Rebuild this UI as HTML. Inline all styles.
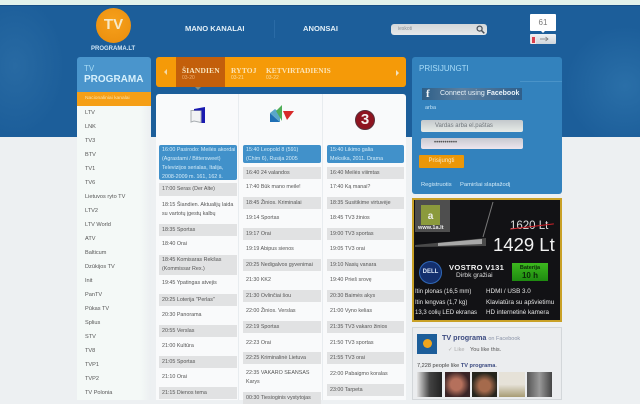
<!DOCTYPE html>
<html><head><meta charset="utf-8">
<style>
html,body{margin:0;padding:0;width:640px;height:400px;overflow:hidden;background:#edf0f2;font-family:"Liberation Sans",sans-serif}
.a{position:absolute;white-space:nowrap}
.r{position:absolute;width:78px;font-size:5.35px;line-height:9px;color:#555;padding-left:3px;box-sizing:border-box;display:flex;flex-direction:column;justify-content:center;white-space:nowrap}
.g{background:#e1e2e3}
.b{position:absolute;width:78px;background:#4191ca;color:#d5ecf8;font-size:5.35px;line-height:9px;padding:1px 0 0 3px;box-sizing:border-box;border-radius:2px;white-space:nowrap}
.m{position:absolute;left:85px;font-size:5.6px;color:#555;line-height:8px;white-space:nowrap}
</style></head><body>
<div class="a" style="left:0;top:0;width:640px;height:5px;background:#e2f2ec"></div>
<div class="a" style="left:0;top:5px;width:640px;height:132px;background:radial-gradient(ellipse 60px 60px at 625px 80px,#2a6fa8,transparent),radial-gradient(ellipse 50px 70px at 15px 60px,#286aa3,transparent),#1c5e9a;border-top:1px solid #174f86;box-sizing:border-box"></div>

<!-- logo -->
<div class="a" style="left:96px;top:8px;width:35px;height:35px;border-radius:50%;background:radial-gradient(circle at 50% 40%,#f7a11c,#e98c0c);color:#f6e9c8;font:bold 15px/33px 'Liberation Sans',sans-serif;text-align:center">TV</div>
<div class="a" style="left:91px;top:45px;font:bold 6px/9px 'Liberation Sans',sans-serif;color:#cfe5f5">PROGRAMA.LT</div>

<!-- nav -->
<div class="a" style="left:185px;top:24px;font:bold 7.6px/10px 'Liberation Sans',sans-serif;color:#e3f0f8">MANO KANALAI</div>
<div class="a" style="left:274px;top:20px;width:1px;height:18px;background:#2a6ba6"></div>
<div class="a" style="left:303px;top:24px;font:bold 7.6px/10px 'Liberation Sans',sans-serif;color:#e3f0f8">ANONSAI</div>

<!-- search -->
<div class="a" style="left:391px;top:24px;width:96px;height:11px;border-radius:3px;background:linear-gradient(#d3d7d9,#e6e9ea);font-size:5px;line-height:11px;color:#8a9096;text-indent:7px">ieskoti</div>
<svg class="a" style="left:476px;top:25px" width="9" height="9" viewBox="0 0 9 9"><circle cx="3.6" cy="3.6" r="2.5" fill="none" stroke="#47505a" stroke-width="1.2"/><path d="M5.5 5.5L8.3 8.3" stroke="#47505a" stroke-width="1.5"/></svg>

<!-- +1 box -->
<div class="a" style="left:530px;top:14px;width:26px;height:17px;background:#fff;border-radius:1px;font-size:8px;line-height:17px;color:#777;text-align:center">61</div>
<div class="a" style="left:541px;top:31px;width:0;height:0;border:2px solid transparent;border-top-color:#fff"></div>
<div class="a" style="left:530px;top:34px;width:26px;height:10px;background:linear-gradient(#eef1f3,#cfd6dc);border-radius:1px"></div>
<svg class="a" style="left:540px;top:36px" width="9" height="6" viewBox="0 0 9 6"><path d="M0 3H8M5.5 1L8 3L5.5 5" fill="none" stroke="#777" stroke-width=".8"/></svg>
<div class="a" style="left:531px;top:36px;width:5px;height:8px;background:#d9404c;border:1px solid #f3e5e5;box-sizing:border-box"></div>

<!-- sidebar -->
<div class="a" style="left:77px;top:57px;width:74px;height:35px;background:#4a95cc;border-radius:3px 3px 0 0"></div>
<div class="a" style="left:84px;top:64px;font-size:8px;line-height:10px;color:#a7dbf5">TV</div>
<div class="a" style="left:84px;top:73px;font:bold 10px/13px 'Liberation Sans',sans-serif;color:#d6f0fc">PROGRAMA</div>
<div class="a" style="left:77px;top:92px;width:74px;height:14px;background:#f59f16;font-size:4.9px;line-height:14px;color:#fbe2a8;text-indent:8px">Nacionaliniai kanalai</div>
<div class="a" style="left:77px;top:106px;width:74px;height:294px;background:linear-gradient(90deg,#f4f9f7 85%,#eceff1)"></div>
<div class="m" style="top:109px">LTV</div>
<div class="m" style="top:123px">LNK</div>
<div class="m" style="top:137px">TV3</div>
<div class="m" style="top:151px">BTV</div>
<div class="m" style="top:165px">TV1</div>
<div class="m" style="top:179px">TV6</div>
<div class="m" style="top:193px">Lietuvos ryto TV</div>
<div class="m" style="top:207px">LTV2</div>
<div class="m" style="top:221px">LTV World</div>
<div class="m" style="top:235px">ATV</div>
<div class="m" style="top:249px">Balticum</div>
<div class="m" style="top:263px">Dzūkijos TV</div>
<div class="m" style="top:277px">Init</div>
<div class="m" style="top:291px">PanTV</div>
<div class="m" style="top:305px">Pūkas TV</div>
<div class="m" style="top:319px">Splius</div>
<div class="m" style="top:333px">STV</div>
<div class="m" style="top:347px">TV8</div>
<div class="m" style="top:361px">TVP1</div>
<div class="m" style="top:375px">TVP2</div>
<div class="m" style="top:389px">TV Polonia</div>

<!-- orange day bar -->
<div class="a" style="left:156px;top:57px;width:250px;height:30px;background:#f59a08;border-radius:3px"></div>
<div class="a" style="left:176px;top:57px;width:49px;height:30px;background:#c35f0b"></div>
<div class="a" style="left:195px;top:87px;width:0;height:0;border:3px solid transparent;border-top-color:#7e8a80"></div>
<div class="a" style="left:164px;top:69px;width:0;height:0;border:3px solid transparent;border-right-color:#f3d9a8;border-left:0"></div>
<div class="a" style="left:182px;top:66px;font:bold 7.4px/9px 'Liberation Serif',serif;letter-spacing:.2px;color:#f8e6c0">ŠIANDIEN</div>
<div class="a" style="left:182px;top:75px;font-size:5px;line-height:7px;color:#f0b070">03-20</div>
<div class="a" style="left:231px;top:66px;font:bold 7.4px/9px 'Liberation Serif',serif;letter-spacing:.2px;color:#fbe4b8">RYTOJ</div>
<div class="a" style="left:231px;top:75px;font-size:5px;line-height:7px;color:#fbdca0">03-21</div>
<div class="a" style="left:266px;top:66px;font:bold 7.4px/9px 'Liberation Serif',serif;letter-spacing:.05px;color:#fbe4b8">KETVIRTADIENIS</div>
<div class="a" style="left:266px;top:75px;font-size:5px;line-height:7px;color:#fbdca0">03-22</div>
<div class="a" style="left:396px;top:70px;width:0;height:0;border:3px solid transparent;border-left-color:#f3e2bd;border-right:0"></div>

<!-- main panel -->
<div class="a" style="left:156px;top:94px;width:250px;height:306px;background:#f9fafb;border-radius:3px 3px 0 0"></div>
<div class="a" style="left:238px;top:94px;width:1px;height:306px;background:#e8ecef"></div>
<div class="a" style="left:322px;top:94px;width:1px;height:306px;background:#e8ecef"></div>

<!-- channel logos -->
<svg class="a" style="left:189px;top:106px" width="18" height="18" viewBox="0 0 18 18"><path d="M2 4.5h10v12l-7-1.5L2 16z" fill="#f2f3f4" stroke="#a9aeb2" stroke-width="1"/><path d="M5 3L16 1v16h-3.5V4.5H5z" fill="#1a1ab0"/></svg>
<svg class="a" style="left:269px;top:105px" width="26" height="18" viewBox="0 0 26 18"><path d="M1 8L11 17H1z" fill="#1f6fb5"/><path d="M1 8L11 17V8L6 4z" fill="#5aa7c9"/><path d="M7 6L13 0V16z" fill="#4fae58"/><path d="M14 6H25L18 15z" fill="#d82a2a"/></svg>
<div class="a" style="left:355px;top:110px;width:20px;height:20px;border-radius:50%;background:#8f1420;border:1px solid #58303a;box-sizing:border-box;font:bold 15px/18px 'Liberation Sans',sans-serif;color:#f5f0f0;text-align:center">3</div>

<!-- column 1 -->
<div class="b" style="left:159px;top:145px;height:35px">16:00 Pasirodo: Meilės akordai<br>(Agrastami / Bittersweet)<br>Televizijos serialas, Italija,<br>2008-2009 m. 161, 162 š.</div>
<div class="r g" style="left:159px;top:183px;height:13px">17:00 Seras (Der Alte)</div>
<div class="r" style="left:159px;top:200px;height:20px">18:15 Šiandien. Aktualijų laida<br>su vartotų įgestų kalbų</div>
<div class="r g" style="left:159px;top:224px;height:12px">18:35 Sportas</div>
<div class="r" style="left:159px;top:238px;height:12px">18:40 Orai</div>
<div class="r g" style="left:159px;top:255px;height:20px">18:45 Komisaras Rekšas<br>(Kommissar Rex.)</div>
<div class="r" style="left:159px;top:277px;height:12px">19:45 Ypatingas atvejis</div>
<div class="r g" style="left:159px;top:294px;height:12px">20:25 Loterija "Perlas"</div>
<div class="r" style="left:159px;top:309px;height:12px">20:30 Panorama</div>
<div class="r g" style="left:159px;top:325px;height:12px">20:55 Verslas</div>
<div class="r" style="left:159px;top:340px;height:12px">21:00 Kultūra</div>
<div class="r g" style="left:159px;top:356px;height:12px">21:05 Sportas</div>
<div class="r" style="left:159px;top:371px;height:12px">21:10 Orai</div>
<div class="r g" style="left:159px;top:387px;height:12px">21:15 Dienos tema</div>

<!-- column 2 -->
<div class="b" style="left:243px;top:145px;height:18px">15:40 Leopold 8 (591)<br>(Chim 6), Rusija 2005</div>
<div class="r g" style="left:243px;top:167px;height:12px">16:40 24 valandos</div>
<div class="r" style="left:243px;top:181px;height:12px">17:40 Būk mano meile!</div>
<div class="r g" style="left:243px;top:197px;height:12px">18:45 Žinios. Kriminalai</div>
<div class="r" style="left:243px;top:212px;height:12px">19:14 Sportas</div>
<div class="r g" style="left:243px;top:228px;height:12px">19:17 Orai</div>
<div class="r" style="left:243px;top:243px;height:12px">19:19 Abipus sienos</div>
<div class="r g" style="left:243px;top:259px;height:12px">20:25 Nedigalvos gyvenimai</div>
<div class="r" style="left:243px;top:274px;height:12px">21:30 KK2</div>
<div class="r g" style="left:243px;top:290px;height:12px">21:30 Ovlinčiai šou</div>
<div class="r" style="left:243px;top:305px;height:12px">22:00 Žinios. Verslas</div>
<div class="r g" style="left:243px;top:321px;height:12px">22:19 Sportas</div>
<div class="r" style="left:243px;top:337px;height:12px">22:23 Orai</div>
<div class="r g" style="left:243px;top:352px;height:12px">22:25 Kriminalinė Lietuva</div>
<div class="r" style="left:243px;top:368px;height:20px">22:35 VAKARO SEANSAS<br>Karys</div>
<div class="r g" style="left:243px;top:392px;height:12px">00:30 Tiesioginis vystytojas</div>

<!-- column 3 -->
<div class="b" style="left:327px;top:145px;height:18px;width:77px">15:40 Likimo galia<br>Meksika, 2011. Drama</div>
<div class="r g" style="left:327px;top:167px;height:12px;width:77px">16:40 Meilės viiimtas</div>
<div class="r" style="left:327px;top:181px;height:12px">17:40 Ką manai?</div>
<div class="r g" style="left:327px;top:197px;height:12px;width:77px">18:35 Susitikime virtuvėje</div>
<div class="r" style="left:327px;top:212px;height:12px">18:45 TV3 žinios</div>
<div class="r g" style="left:327px;top:228px;height:12px;width:77px">19:00 TV3 sportas</div>
<div class="r" style="left:327px;top:243px;height:12px">19:05 TV3 orai</div>
<div class="r g" style="left:327px;top:259px;height:12px;width:77px">19:10 Nasių vanara</div>
<div class="r" style="left:327px;top:274px;height:12px">19:40 Prieš srovę</div>
<div class="r g" style="left:327px;top:290px;height:12px;width:77px">20:30 Baimės akys</div>
<div class="r" style="left:327px;top:305px;height:12px">21:00 Vyno kelias</div>
<div class="r g" style="left:327px;top:321px;height:12px;width:77px">21:35 TV3 vakaro žinios</div>
<div class="r" style="left:327px;top:337px;height:12px">21:50 TV3 sportas</div>
<div class="r g" style="left:327px;top:352px;height:12px;width:77px">21:55 TV3 orai</div>
<div class="r" style="left:327px;top:368px;height:12px">22:00 Pabaigmo koralas</div>
<div class="r g" style="left:327px;top:384px;height:12px;width:77px">23:00 Tarpeta</div>

<!-- login -->
<div class="a" style="left:412px;top:57px;width:150px;height:137px;background:#3382bd;border-radius:3px"></div>
<div class="a" style="left:419px;top:64px;font-size:8px;line-height:10px;color:#a8dcf8">PRISIJUNGTI</div>
<div class="a" style="left:520px;top:81px;width:42px;height:1px;background:#4a93c8"></div>
<div class="a" style="left:422px;top:88px;width:100px;height:12px;background:linear-gradient(90deg,#2e5f88,#5d7f9f 40%,#2f5f8b);font-size:7px;line-height:12px;color:#e8f2f8;text-indent:18px">Connect using <b>Facebook</b></div>
<div class="a" style="left:426px;top:88px;font:bold 11px/13px 'Liberation Serif',serif;color:#f3f6f8">f</div>
<div class="a" style="left:425px;top:104px;font-size:5.5px;line-height:8px;color:#bde0f5">arba</div>
<div class="a" style="left:421px;top:120px;width:102px;height:12px;background:linear-gradient(#c4c9cc,#e8ece8);border-radius:2px;font-size:6px;line-height:12px;color:#6f757b;text-indent:14px">Vardas arba el.paštas</div>
<div class="a" style="left:421px;top:138px;width:102px;height:11px;background:linear-gradient(#c9c9d0,#eee6ee);border-radius:2px;font-size:6px;line-height:11px;color:#555;text-indent:13px">•••••••••••</div>
<div class="a" style="left:419px;top:155px;width:45px;height:13px;background:#ec9708;border-radius:1px;font-size:6px;line-height:13px;color:#fbe9c4;text-align:center">Prisijungti</div>
<div class="a" style="left:421px;top:181px;font-size:5.8px;line-height:8px;color:#d3ebf8">Registruotis</div>
<div class="a" style="left:460px;top:181px;font-size:5.8px;line-height:8px;color:#d3ebf8">Pamiršai slaptažodį</div>

<!-- ad -->
<div class="a" style="left:412px;top:198px;width:150px;height:124px;background:#121215;border:2px solid #c9a127;box-sizing:border-box"></div>
<svg class="a" style="left:414px;top:200px" width="82" height="50" viewBox="0 0 82 50"><path d="M79 2L69 37" stroke="#777" stroke-width="1"/><path d="M1 45L72 38V46L1 47z" fill="#4a4a4a"/><path d="M24 43L68 39V44L24 46z" fill="#a8a8a8"/></svg>
<div class="a" style="left:415px;top:200px;width:35px;height:32px;background:#4e4e4e"></div>
<div class="a" style="left:421px;top:205px;width:19px;height:20px;background:#8b9a3c;font:bold 10px/24px 'Liberation Sans',sans-serif;color:#eee;text-align:center">a</div>
<div class="a" style="left:418px;top:225px;font:bold 5.6px/7px 'Liberation Sans',sans-serif;color:#eee">www.1a.lt</div>
<div class="a" style="left:510px;top:220px;font-size:11.5px;line-height:13px;color:#ddd">1620 Lt</div>
<div class="a" style="left:510px;top:226px;width:44px;height:1px;background:#d0222a;transform:rotate(-7deg)"></div>
<div class="a" style="left:493px;top:235px;font-size:18.5px;line-height:20px;color:#f2f2f2">1429 Lt</div>
<div class="a" style="left:419px;top:261px;width:23px;height:23px;border-radius:50%;background:#14306e;border:1px solid #3068b8;box-sizing:border-box;font:bold 6px/21px 'Liberation Sans',sans-serif;color:#d8e4f5;text-align:center">DELL</div>
<div class="a" style="left:449px;top:263px;font:bold 7.6px/9px 'Liberation Sans',sans-serif;color:#f2f2f2;letter-spacing:.3px">VOSTRO V131</div>
<div class="a" style="left:456px;top:272px;font-size:6.6px;line-height:8px;color:#ddd">Dirbk gražiai</div>
<div class="a" style="left:512px;top:263px;width:36px;height:18px;background:linear-gradient(#3cb81e,#1e8a10);font:bold 5.5px/7px 'Liberation Sans',sans-serif;color:#0b2a08;text-align:center;padding-top:2px;box-sizing:border-box">Baterija<br><span style="font-size:8px">10 h</span></div>
<div class="a" style="left:415px;top:287px;font-size:6px;line-height:10.5px;color:#e6e6e6">Itin plonas (16,5 mm)<br>Itin lengvas (1,7 kg)<br>13,3 colių LED ekranas</div>
<div class="a" style="left:486px;top:287px;font-size:6.3px;line-height:10.5px;color:#e6e6e6">HDMI / USB 3.0<br>Klaviatūra su apšvietimu<br>HD internetinė kamera</div>

<!-- facebook -->
<div class="a" style="left:412px;top:327px;width:150px;height:73px;background:#ebedef;border:1px solid #d3d7da;box-sizing:border-box"></div>
<div class="a" style="left:417px;top:334px;width:20px;height:20px;background:#1d5e9a"></div>
<div class="a" style="left:423px;top:339px;width:9px;height:9px;border-radius:50%;background:#f1a51c"></div>
<div class="a" style="left:442px;top:333px;font:bold 7.2px/9px 'Liberation Sans',sans-serif;color:#3b4a80">TV programa <span style="font:5.5px 'Liberation Sans',sans-serif;color:#8a93a8">on Facebook</span></div>
<div class="a" style="left:470px;top:346px;font-size:5.6px;line-height:8px;color:#555">You like this.</div>
<div class="a" style="left:448px;top:346px;font-size:5.6px;line-height:8px;color:#aaa">✓ Like</div>
<div class="a" style="left:417px;top:362px;font-size:5.6px;line-height:8px;color:#444">7,228 people like <span style="color:#3b4a80;font-weight:bold">TV programa</span>.</div>
<div class="a" style="left:417px;top:372px;width:25px;height:25px;background:linear-gradient(90deg,#e4e4e4,#444 50%,#222)"></div>
<div class="a" style="left:445px;top:372px;width:25px;height:25px;background:radial-gradient(circle at 45% 50%,#b5705c 30%,#3a2426 70%)"></div>
<div class="a" style="left:472px;top:372px;width:25px;height:25px;background:radial-gradient(circle at 50% 55%,#a56a4c 30%,#26251d 70%)"></div>
<div class="a" style="left:499px;top:372px;width:26px;height:25px;background:linear-gradient(#e6e2d8 50%,#a89c74)"></div>
<div class="a" style="left:527px;top:372px;width:25px;height:25px;background:linear-gradient(90deg,#555,#999 50%,#444)"></div>
</body></html>
